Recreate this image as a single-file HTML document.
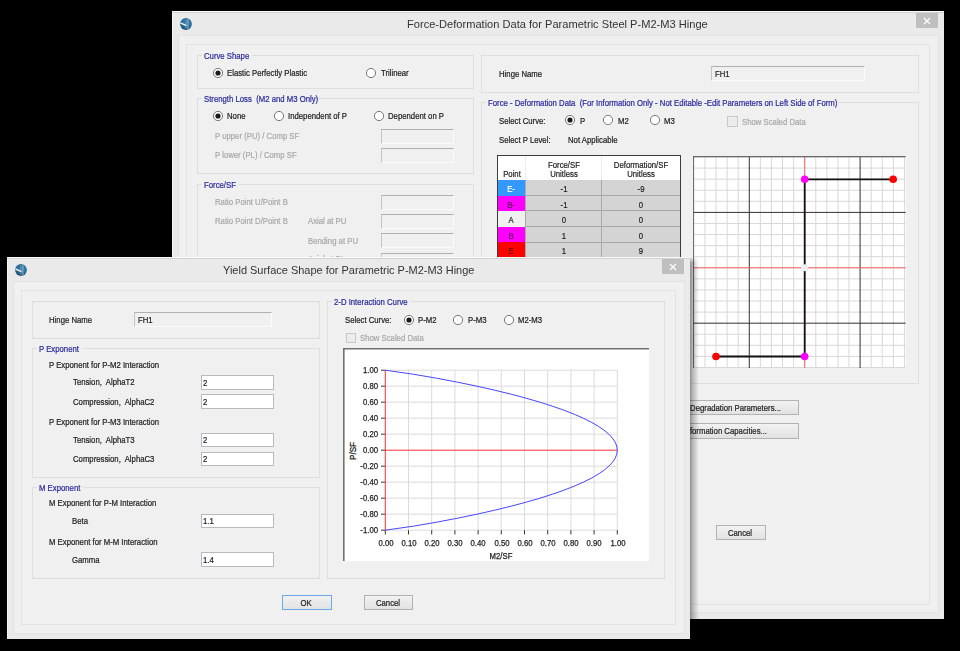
<!DOCTYPE html><html><head><meta charset="utf-8"><style>
html,body{margin:0;padding:0;}
body{width:960px;height:651px;background:#000;position:relative;overflow:hidden;font-family:"Liberation Sans",sans-serif;}
.t{position:absolute;white-space:nowrap;line-height:1;transform-origin:0 0;-webkit-text-stroke:0.25px currentColor;}
</style></head><body>
<div style="position:absolute;left:172.00px;top:11.00px;width:772.00px;height:607.50px;background:#eaeaea;border-top:1px solid #fafafa;border-left:1px solid #f7f7f7;box-sizing:border-box;"></div>
<div style="position:absolute;left:172.00px;top:12.00px;width:772.00px;height:1.00px;background:#d2d2d2;"></div>
<svg style="position:absolute;left:176.00px;top:13.50px" width="20" height="20" viewBox="0 0 20 20"><defs><radialGradient id="g186" cx="60%" cy="35%" r="75%"><stop offset="0" stop-color="#3d86b4"/><stop offset="0.6" stop-color="#2a6a93"/><stop offset="1" stop-color="#173f5e"/></radialGradient></defs><circle cx="10" cy="10" r="5.9" fill="url(#g186)"/><path d="M11.9 4.6 L11.9 15.4" stroke="#8db5cf" stroke-width="1"/><path d="M9.9 5.5 L9.9 15" stroke="#6f98b3" stroke-width="0.8"/><path d="M4.5 9 L10.5 11.6" stroke="#e4ecf1" stroke-width="1.5"/></svg>
<div class="t" style="left:407.30px;top:19.00px;font-size:11.8px;color:#333;transform:scale(0.94,1);transform-origin:0 9px;-webkit-text-stroke:0;">Force-Deformation Data for Parametric Steel P-M2-M3 Hinge</div>
<div style="position:absolute;left:916.00px;top:13.00px;width:22.40px;height:15.00px;background:#bfbfbf;"></div>
<svg style="position:absolute;left:922.20px;top:15.50px" width="10" height="10" viewBox="0 0 10 10"><path d="M2 2 L8 8 M8 2 L2 8" stroke="#fff" stroke-width="1.25"/></svg>
<div style="position:absolute;left:178.00px;top:35.00px;width:761.00px;height:578.00px;background:#f0f0f0;border:1px solid #e3e3e3;box-sizing:border-box;"></div>
<div style="position:absolute;left:186.00px;top:44.00px;width:744.00px;height:561.00px;border:1px solid #e3e3e3;box-sizing:border-box;"></div>
<div style="position:absolute;left:197.00px;top:55.00px;width:277.00px;height:34.00px;border:1px solid #dedede;box-sizing:border-box;"></div>
<div style="position:absolute;left:201.60px;top:50.70px;width:50.00px;height:10.00px;background:#f0f0f0;"></div>
<div class="t" style="left:203.60px;top:51.00px;font-size:10px;color:#2a2a9e;transform:scale(0.775,0.92);transform-origin:0 8px;">Curve Shape</div>
<svg style="position:absolute;left:211.60px;top:67.30px" width="12" height="12" viewBox="0 0 12 12"><circle cx="6" cy="6" r="4.6" fill="#fff" stroke="#6a6a6a" stroke-width="0.9"/><circle cx="6" cy="6" r="2.6" fill="#1a1a1a"/></svg>
<div class="t" style="left:227.20px;top:68.00px;font-size:10px;color:#1e1e1e;transform:scale(0.775,0.92);transform-origin:0 8px;">Elastic Perfectly Plastic</div>
<svg style="position:absolute;left:365.00px;top:67.30px" width="12" height="12" viewBox="0 0 12 12"><circle cx="6" cy="6" r="4.6" fill="#fff" stroke="#6a6a6a" stroke-width="0.9"/></svg>
<div class="t" style="left:380.70px;top:68.00px;font-size:10px;color:#1e1e1e;transform:scale(0.775,0.92);transform-origin:0 8px;">Trilinear</div>
<div style="position:absolute;left:197.00px;top:97.60px;width:277.00px;height:76.40px;border:1px solid #dedede;box-sizing:border-box;"></div>
<div style="position:absolute;left:201.60px;top:93.70px;width:89.00px;height:10.00px;background:#f0f0f0;"></div>
<div class="t" style="left:203.60px;top:94.00px;font-size:10px;color:#2a2a9e;transform:scale(0.775,0.92);transform-origin:0 8px;">Strength Loss&nbsp; (M2 and M3 Only)</div>
<svg style="position:absolute;left:211.60px;top:110.30px" width="12" height="12" viewBox="0 0 12 12"><circle cx="6" cy="6" r="4.6" fill="#fff" stroke="#6a6a6a" stroke-width="0.9"/><circle cx="6" cy="6" r="2.6" fill="#1a1a1a"/></svg>
<div class="t" style="left:227.20px;top:111.00px;font-size:10px;color:#1e1e1e;transform:scale(0.775,0.92);transform-origin:0 8px;">None</div>
<svg style="position:absolute;left:272.70px;top:110.30px" width="12" height="12" viewBox="0 0 12 12"><circle cx="6" cy="6" r="4.6" fill="#fff" stroke="#6a6a6a" stroke-width="0.9"/></svg>
<div class="t" style="left:288.00px;top:111.00px;font-size:10px;color:#1e1e1e;transform:scale(0.775,0.92);transform-origin:0 8px;">Independent of P</div>
<svg style="position:absolute;left:372.80px;top:110.30px" width="12" height="12" viewBox="0 0 12 12"><circle cx="6" cy="6" r="4.6" fill="#fff" stroke="#6a6a6a" stroke-width="0.9"/></svg>
<div class="t" style="left:387.80px;top:111.00px;font-size:10px;color:#1e1e1e;transform:scale(0.775,0.92);transform-origin:0 8px;">Dependent on P</div>
<div class="t" style="left:215.00px;top:131.00px;font-size:10px;color:#a8a8a8;transform:scale(0.775,0.92);transform-origin:0 8px;">P upper (PU) / Comp SF</div>
<div style="position:absolute;left:381.00px;top:128.70px;width:72.60px;height:15.00px;background:#f0f0f0;border:1px solid #fbfbfb;border-top-color:#b0b0b0;border-left-color:#c4c4c4;box-sizing:border-box;"></div>
<div class="t" style="left:215.00px;top:150.00px;font-size:10px;color:#a8a8a8;transform:scale(0.775,0.92);transform-origin:0 8px;">P lower (PL) / Comp SF</div>
<div style="position:absolute;left:381.00px;top:148.00px;width:72.60px;height:15.00px;background:#f0f0f0;border:1px solid #fbfbfb;border-top-color:#b0b0b0;border-left-color:#c4c4c4;box-sizing:border-box;"></div>
<div style="position:absolute;left:197.00px;top:183.50px;width:277.00px;height:116.50px;border:1px solid #dedede;box-sizing:border-box;"></div>
<div style="position:absolute;left:201.60px;top:179.40px;width:37.00px;height:10.00px;background:#f0f0f0;"></div>
<div class="t" style="left:203.60px;top:180.00px;font-size:10px;color:#2a2a9e;transform:scale(0.775,0.92);transform-origin:0 8px;">Force/SF</div>
<div class="t" style="left:215.00px;top:197.00px;font-size:10px;color:#a8a8a8;transform:scale(0.775,0.92);transform-origin:0 8px;">Ratio Point U/Point B</div>
<div style="position:absolute;left:381.00px;top:194.50px;width:72.60px;height:15.00px;background:#f0f0f0;border:1px solid #fbfbfb;border-top-color:#b0b0b0;border-left-color:#c4c4c4;box-sizing:border-box;"></div>
<div class="t" style="left:215.00px;top:216.00px;font-size:10px;color:#a8a8a8;transform:scale(0.775,0.92);transform-origin:0 8px;">Ratio Point D/Point B</div>
<div class="t" style="left:307.50px;top:216.00px;font-size:10px;color:#a8a8a8;transform:scale(0.775,0.92);transform-origin:0 8px;">Axial at PU</div>
<div style="position:absolute;left:381.00px;top:213.70px;width:72.60px;height:15.00px;background:#f0f0f0;border:1px solid #fbfbfb;border-top-color:#b0b0b0;border-left-color:#c4c4c4;box-sizing:border-box;"></div>
<div class="t" style="left:307.50px;top:236.00px;font-size:10px;color:#a8a8a8;transform:scale(0.775,0.92);transform-origin:0 8px;">Bending at PU</div>
<div style="position:absolute;left:381.00px;top:233.00px;width:72.60px;height:15.00px;background:#f0f0f0;border:1px solid #fbfbfb;border-top-color:#b0b0b0;border-left-color:#c4c4c4;box-sizing:border-box;"></div>
<div class="t" style="left:307.50px;top:254.00px;font-size:10px;color:#a8a8a8;transform:scale(0.775,0.92);transform-origin:0 8px;">Axial at PL</div>
<div style="position:absolute;left:381.00px;top:252.50px;width:72.60px;height:15.00px;background:#f0f0f0;border:1px solid #fbfbfb;border-top-color:#b0b0b0;border-left-color:#c4c4c4;box-sizing:border-box;"></div>
<div style="position:absolute;left:481.00px;top:55.00px;width:438.00px;height:38.00px;border:1px solid #dedede;box-sizing:border-box;"></div>
<div class="t" style="left:498.70px;top:69.00px;font-size:10px;color:#1e1e1e;transform:scale(0.775,0.92);transform-origin:0 8px;">Hinge Name</div>
<div style="position:absolute;left:711.25px;top:66.25px;width:153.75px;height:15.00px;background:#f0f0f0;border:1px solid #fbfbfb;border-top-color:#b0b0b0;border-left-color:#c4c4c4;box-sizing:border-box;"></div>
<div class="t" style="left:714.75px;top:69.00px;font-size:10px;color:#1e1e1e;transform:scale(0.775,0.92);transform-origin:0 8px;">FH1</div>
<div style="position:absolute;left:481.00px;top:102.00px;width:438.00px;height:282.00px;border:1px solid #dedede;box-sizing:border-box;"></div>
<div style="position:absolute;left:485.50px;top:97.30px;width:352.00px;height:10.00px;background:#f0f0f0;"></div>
<div class="t" style="left:487.50px;top:98.00px;font-size:10px;color:#2a2a9e;transform:scale(0.775,0.92);transform-origin:0 8px;">Force - Deformation Data&nbsp; (For Information Only - Not Editable -Edit Parameters on Left Side of Form)</div>
<div class="t" style="left:498.70px;top:116.00px;font-size:10px;color:#1e1e1e;transform:scale(0.775,0.92);transform-origin:0 8px;">Select Curve:</div>
<svg style="position:absolute;left:564.00px;top:114.00px" width="12" height="12" viewBox="0 0 12 12"><circle cx="6" cy="6" r="4.6" fill="#fff" stroke="#6a6a6a" stroke-width="0.9"/><circle cx="6" cy="6" r="2.6" fill="#1a1a1a"/></svg>
<div class="t" style="left:579.50px;top:116.00px;font-size:10px;color:#1e1e1e;transform:scale(0.775,0.92);transform-origin:0 8px;">P</div>
<svg style="position:absolute;left:602.20px;top:114.00px" width="12" height="12" viewBox="0 0 12 12"><circle cx="6" cy="6" r="4.6" fill="#fff" stroke="#6a6a6a" stroke-width="0.9"/></svg>
<div class="t" style="left:617.50px;top:116.00px;font-size:10px;color:#1e1e1e;transform:scale(0.775,0.92);transform-origin:0 8px;">M2</div>
<svg style="position:absolute;left:649.00px;top:114.00px" width="12" height="12" viewBox="0 0 12 12"><circle cx="6" cy="6" r="4.6" fill="#fff" stroke="#6a6a6a" stroke-width="0.9"/></svg>
<div class="t" style="left:664.00px;top:116.00px;font-size:10px;color:#1e1e1e;transform:scale(0.775,0.92);transform-origin:0 8px;">M3</div>
<div style="position:absolute;left:727.00px;top:116.00px;width:10.50px;height:10.50px;border:1px solid #c8c8c8;background:#ececec;box-sizing:border-box;"></div>
<div class="t" style="left:741.80px;top:117.00px;font-size:10px;color:#a8a8a8;transform:scale(0.775,0.92);transform-origin:0 8px;">Show Scaled Data</div>
<div class="t" style="left:498.70px;top:135.00px;font-size:10px;color:#1e1e1e;transform:scale(0.775,0.92);transform-origin:0 8px;">Select P Level:</div>
<div class="t" style="left:567.50px;top:135.00px;font-size:10px;color:#1e1e1e;transform:scale(0.775,0.92);transform-origin:0 8px;">Not Applicable</div>
<div style="position:absolute;left:497.00px;top:155.00px;width:184.00px;height:145.00px;background:#d4d4d4;border:1px solid #3c3c3c;box-sizing:border-box;"></div>
<div style="position:absolute;left:498.00px;top:156.00px;width:182.00px;height:24.20px;background:#fff;"></div>
<div style="position:absolute;left:524.50px;top:156.00px;width:1.00px;height:24.50px;background:#e8eef8;"></div>
<div style="position:absolute;left:601.00px;top:156.00px;width:1.00px;height:24.50px;background:#e8eef8;"></div>
<div class="t" style="left:361.90px;width:300px;text-align:center;top:169.00px;font-size:10px;color:#1e1e1e;transform:scale(0.775,0.92);transform-origin:50% 8px;">Point</div>
<div class="t" style="left:414.00px;width:300px;text-align:center;top:160.00px;font-size:10px;color:#1e1e1e;transform:scale(0.775,0.92);transform-origin:50% 8px;">Force/SF</div>
<div class="t" style="left:414.00px;width:300px;text-align:center;top:169.00px;font-size:10px;color:#1e1e1e;transform:scale(0.775,0.92);transform-origin:50% 8px;">Unitless</div>
<div class="t" style="left:491.00px;width:300px;text-align:center;top:160.00px;font-size:10px;color:#1e1e1e;transform:scale(0.775,0.92);transform-origin:50% 8px;">Deformation/SF</div>
<div class="t" style="left:491.00px;width:300px;text-align:center;top:169.00px;font-size:10px;color:#1e1e1e;transform:scale(0.775,0.92);transform-origin:50% 8px;">Unitless</div>
<div style="position:absolute;left:498.00px;top:180.20px;width:27.00px;height:15.50px;background:#3399ff;"></div>
<div style="position:absolute;left:525.00px;top:194.90px;width:155.00px;height:0.80px;background:#a8a8a8;"></div>
<div style="position:absolute;left:524.50px;top:180.20px;width:1.00px;height:15.50px;background:#a8a8a8;"></div>
<div style="position:absolute;left:601.00px;top:180.20px;width:1.00px;height:15.50px;background:#a8a8a8;"></div>
<div class="t" style="left:360.80px;width:300px;text-align:center;top:184.00px;font-size:10px;color:#ffffff;transform:scale(0.775,0.92);transform-origin:50% 8px;">E-</div>
<div class="t" style="left:413.50px;width:300px;text-align:center;top:184.00px;font-size:10px;color:#1e1e1e;transform:scale(0.775,0.92);transform-origin:50% 8px;">-1</div>
<div class="t" style="left:491.00px;width:300px;text-align:center;top:184.00px;font-size:10px;color:#1e1e1e;transform:scale(0.775,0.92);transform-origin:50% 8px;">-9</div>
<div style="position:absolute;left:498.00px;top:195.75px;width:27.00px;height:15.50px;background:#ff00ff;"></div>
<div style="position:absolute;left:525.00px;top:210.45px;width:155.00px;height:0.80px;background:#a8a8a8;"></div>
<div style="position:absolute;left:524.50px;top:195.75px;width:1.00px;height:15.50px;background:#a8a8a8;"></div>
<div style="position:absolute;left:601.00px;top:195.75px;width:1.00px;height:15.50px;background:#a8a8a8;"></div>
<div class="t" style="left:360.80px;width:300px;text-align:center;top:200.00px;font-size:10px;color:#5a005a;transform:scale(0.775,0.92);transform-origin:50% 8px;">B-</div>
<div class="t" style="left:413.50px;width:300px;text-align:center;top:200.00px;font-size:10px;color:#1e1e1e;transform:scale(0.775,0.92);transform-origin:50% 8px;">-1</div>
<div class="t" style="left:491.00px;width:300px;text-align:center;top:200.00px;font-size:10px;color:#1e1e1e;transform:scale(0.775,0.92);transform-origin:50% 8px;">0</div>
<div style="position:absolute;left:498.00px;top:211.30px;width:27.00px;height:15.50px;background:#f0f0f0;"></div>
<div style="position:absolute;left:525.00px;top:226.00px;width:155.00px;height:0.80px;background:#a8a8a8;"></div>
<div style="position:absolute;left:524.50px;top:211.30px;width:1.00px;height:15.50px;background:#a8a8a8;"></div>
<div style="position:absolute;left:601.00px;top:211.30px;width:1.00px;height:15.50px;background:#a8a8a8;"></div>
<div class="t" style="left:360.80px;width:300px;text-align:center;top:215.00px;font-size:10px;color:#1e1e1e;transform:scale(0.775,0.92);transform-origin:50% 8px;">A</div>
<div class="t" style="left:413.50px;width:300px;text-align:center;top:215.00px;font-size:10px;color:#1e1e1e;transform:scale(0.775,0.92);transform-origin:50% 8px;">0</div>
<div class="t" style="left:491.00px;width:300px;text-align:center;top:215.00px;font-size:10px;color:#1e1e1e;transform:scale(0.775,0.92);transform-origin:50% 8px;">0</div>
<div style="position:absolute;left:498.00px;top:226.85px;width:27.00px;height:15.50px;background:#ff00ff;"></div>
<div style="position:absolute;left:525.00px;top:241.55px;width:155.00px;height:0.80px;background:#a8a8a8;"></div>
<div style="position:absolute;left:524.50px;top:226.85px;width:1.00px;height:15.50px;background:#a8a8a8;"></div>
<div style="position:absolute;left:601.00px;top:226.85px;width:1.00px;height:15.50px;background:#a8a8a8;"></div>
<div class="t" style="left:360.80px;width:300px;text-align:center;top:231.00px;font-size:10px;color:#5a005a;transform:scale(0.775,0.92);transform-origin:50% 8px;">B</div>
<div class="t" style="left:413.50px;width:300px;text-align:center;top:231.00px;font-size:10px;color:#1e1e1e;transform:scale(0.775,0.92);transform-origin:50% 8px;">1</div>
<div class="t" style="left:491.00px;width:300px;text-align:center;top:231.00px;font-size:10px;color:#1e1e1e;transform:scale(0.775,0.92);transform-origin:50% 8px;">0</div>
<div style="position:absolute;left:498.00px;top:242.40px;width:27.00px;height:15.50px;background:#ff0000;"></div>
<div style="position:absolute;left:525.00px;top:257.10px;width:155.00px;height:0.80px;background:#a8a8a8;"></div>
<div style="position:absolute;left:524.50px;top:242.40px;width:1.00px;height:15.50px;background:#a8a8a8;"></div>
<div style="position:absolute;left:601.00px;top:242.40px;width:1.00px;height:15.50px;background:#a8a8a8;"></div>
<div class="t" style="left:360.80px;width:300px;text-align:center;top:246.00px;font-size:10px;color:#5a0000;transform:scale(0.775,0.92);transform-origin:50% 8px;">E</div>
<div class="t" style="left:413.50px;width:300px;text-align:center;top:246.00px;font-size:10px;color:#1e1e1e;transform:scale(0.775,0.92);transform-origin:50% 8px;">1</div>
<div class="t" style="left:491.00px;width:300px;text-align:center;top:246.00px;font-size:10px;color:#1e1e1e;transform:scale(0.775,0.92);transform-origin:50% 8px;">9</div>
<svg style="position:absolute;left:693.3px;top:155.8px" width="212.70000000000005" height="212.2" viewBox="693.3 155.8 212.70000000000005 212.2"><rect x="693.3" y="155.8" width="212.70000000000005" height="212.2" fill="#fff"/><line x1="694.2" y1="155.8" x2="694.2" y2="368" stroke="#d8d8d8" stroke-width="1"/><line x1="693.3" y1="156.8" x2="906" y2="156.8" stroke="#d8d8d8" stroke-width="1"/><line x1="705.28" y1="155.8" x2="705.28" y2="368" stroke="#d8d8d8" stroke-width="1"/><line x1="693.3" y1="167.88000000000002" x2="906" y2="167.88000000000002" stroke="#d8d8d8" stroke-width="1"/><line x1="716.36" y1="155.8" x2="716.36" y2="368" stroke="#d8d8d8" stroke-width="1"/><line x1="693.3" y1="178.96000000000004" x2="906" y2="178.96000000000004" stroke="#d8d8d8" stroke-width="1"/><line x1="727.44" y1="155.8" x2="727.44" y2="368" stroke="#d8d8d8" stroke-width="1"/><line x1="693.3" y1="190.04000000000002" x2="906" y2="190.04000000000002" stroke="#d8d8d8" stroke-width="1"/><line x1="738.52" y1="155.8" x2="738.52" y2="368" stroke="#d8d8d8" stroke-width="1"/><line x1="693.3" y1="201.12" x2="906" y2="201.12" stroke="#d8d8d8" stroke-width="1"/><line x1="760.68" y1="155.8" x2="760.68" y2="368" stroke="#d8d8d8" stroke-width="1"/><line x1="693.3" y1="223.28000000000003" x2="906" y2="223.28000000000003" stroke="#d8d8d8" stroke-width="1"/><line x1="771.76" y1="155.8" x2="771.76" y2="368" stroke="#d8d8d8" stroke-width="1"/><line x1="693.3" y1="234.36" x2="906" y2="234.36" stroke="#d8d8d8" stroke-width="1"/><line x1="782.84" y1="155.8" x2="782.84" y2="368" stroke="#d8d8d8" stroke-width="1"/><line x1="693.3" y1="245.44000000000003" x2="906" y2="245.44000000000003" stroke="#d8d8d8" stroke-width="1"/><line x1="793.92" y1="155.8" x2="793.92" y2="368" stroke="#d8d8d8" stroke-width="1"/><line x1="693.3" y1="256.52000000000004" x2="906" y2="256.52000000000004" stroke="#d8d8d8" stroke-width="1"/><line x1="805.0" y1="155.8" x2="805.0" y2="368" stroke="#d8d8d8" stroke-width="1"/><line x1="693.3" y1="267.6" x2="906" y2="267.6" stroke="#d8d8d8" stroke-width="1"/><line x1="816.08" y1="155.8" x2="816.08" y2="368" stroke="#d8d8d8" stroke-width="1"/><line x1="693.3" y1="278.68" x2="906" y2="278.68" stroke="#d8d8d8" stroke-width="1"/><line x1="827.16" y1="155.8" x2="827.16" y2="368" stroke="#d8d8d8" stroke-width="1"/><line x1="693.3" y1="289.76000000000005" x2="906" y2="289.76000000000005" stroke="#d8d8d8" stroke-width="1"/><line x1="838.24" y1="155.8" x2="838.24" y2="368" stroke="#d8d8d8" stroke-width="1"/><line x1="693.3" y1="300.84000000000003" x2="906" y2="300.84000000000003" stroke="#d8d8d8" stroke-width="1"/><line x1="849.32" y1="155.8" x2="849.32" y2="368" stroke="#d8d8d8" stroke-width="1"/><line x1="693.3" y1="311.92" x2="906" y2="311.92" stroke="#d8d8d8" stroke-width="1"/><line x1="871.48" y1="155.8" x2="871.48" y2="368" stroke="#d8d8d8" stroke-width="1"/><line x1="693.3" y1="334.08000000000004" x2="906" y2="334.08000000000004" stroke="#d8d8d8" stroke-width="1"/><line x1="882.56" y1="155.8" x2="882.56" y2="368" stroke="#d8d8d8" stroke-width="1"/><line x1="693.3" y1="345.16" x2="906" y2="345.16" stroke="#d8d8d8" stroke-width="1"/><line x1="893.64" y1="155.8" x2="893.64" y2="368" stroke="#d8d8d8" stroke-width="1"/><line x1="693.3" y1="356.24" x2="906" y2="356.24" stroke="#d8d8d8" stroke-width="1"/><line x1="904.72" y1="155.8" x2="904.72" y2="368" stroke="#d8d8d8" stroke-width="1"/><line x1="693.3" y1="367.32000000000005" x2="906" y2="367.32000000000005" stroke="#d8d8d8" stroke-width="1"/><line x1="749.6" y1="155.8" x2="749.6" y2="368" stroke="#303030" stroke-width="1"/><line x1="693.3" y1="212.20000000000002" x2="906" y2="212.20000000000002" stroke="#303030" stroke-width="1"/><line x1="860.4" y1="155.8" x2="860.4" y2="368" stroke="#303030" stroke-width="1"/><line x1="693.3" y1="323.0" x2="906" y2="323.0" stroke="#303030" stroke-width="1"/><line x1="693.3" y1="267.6" x2="906" y2="267.6" stroke="#ff6060" stroke-width="1"/><line x1="805" y1="155.8" x2="805" y2="368" stroke="#ff6060" stroke-width="1"/><polyline points="893.5,179.1 805,179.1 805,356.3 716.3,356.3" fill="none" stroke="#111" stroke-width="1.8"/><circle cx="805" cy="179.1" r="3.8" fill="#ff00ff"/><circle cx="893.5" cy="179.1" r="3.8" fill="#ff0000"/><circle cx="805" cy="356.3" r="3.8" fill="#ff00ff"/><circle cx="716.3" cy="356.3" r="3.8" fill="#ff0000"/><circle cx="805" cy="267.6" r="3.5" fill="#eeeeee"/><line x1="693.3" y1="156.5" x2="906" y2="156.5" stroke="#6a6a6a" stroke-width="1.3"/><line x1="693.5" y1="155.8" x2="693.5" y2="368" stroke="#5a5a5a" stroke-width="1.3"/></svg>
<div style="position:absolute;left:660.00px;top:400.00px;width:138.70px;height:14.70px;background:linear-gradient(#f2f2f2,#e2e2e2);border:1px solid #b2b2b2;box-sizing:border-box;"></div>
<div class="t" style="left:480.80px;width:300px;text-align:right;top:403.00px;font-size:10px;color:#1e1e1e;transform:scale(0.775,0.92);transform-origin:100% 8px;">Modify Strength Degradation Parameters...</div>
<div style="position:absolute;left:660.00px;top:423.10px;width:138.70px;height:15.50px;background:linear-gradient(#f2f2f2,#e2e2e2);border:1px solid #b2b2b2;box-sizing:border-box;"></div>
<div class="t" style="left:467.20px;width:300px;text-align:right;top:426.00px;font-size:10px;color:#1e1e1e;transform:scale(0.775,0.92);transform-origin:100% 8px;">Modify/Show Deformation Capacities...</div>
<div style="position:absolute;left:716.00px;top:524.60px;width:49.90px;height:15.10px;background:linear-gradient(#f2f2f2,#e2e2e2);border:1px solid #b2b2b2;box-sizing:border-box;"></div>
<div class="t" style="left:590.15px;width:300px;text-align:center;top:528.00px;font-size:10px;color:#1e1e1e;transform:scale(0.775,0.92);transform-origin:50% 8px;">Cancel</div>
<div style="position:absolute;left:689.50px;top:257.00px;width:9.50px;height:382.50px;background:linear-gradient(90deg,rgba(0,0,0,.40),rgba(0,0,0,.22) 35%,rgba(0,0,0,0));-webkit-mask-image:linear-gradient(180deg,transparent,#000 6px);"></div>
<div style="position:absolute;left:7.00px;top:257.00px;width:682.60px;height:382.40px;background:#eaeaea;border-top:1px solid #fafafa;border-left:1px solid #f7f7f7;box-sizing:border-box;"></div>
<div style="position:absolute;left:7.00px;top:258.00px;width:682.60px;height:1.00px;background:#d2d2d2;"></div>
<svg style="position:absolute;left:10.70px;top:259.70px" width="20" height="20" viewBox="0 0 20 20"><defs><radialGradient id="g20" cx="60%" cy="35%" r="75%"><stop offset="0" stop-color="#3d86b4"/><stop offset="0.6" stop-color="#2a6a93"/><stop offset="1" stop-color="#173f5e"/></radialGradient></defs><circle cx="10" cy="10" r="5.9" fill="url(#g20)"/><path d="M11.9 4.6 L11.9 15.4" stroke="#8db5cf" stroke-width="1"/><path d="M9.9 5.5 L9.9 15" stroke="#6f98b3" stroke-width="0.8"/><path d="M4.5 9 L10.5 11.6" stroke="#e4ecf1" stroke-width="1.5"/></svg>
<div class="t" style="left:222.70px;top:265.00px;font-size:11.8px;color:#333;transform:scale(0.93,1);transform-origin:0 9px;-webkit-text-stroke:0;">Yield Surface Shape for Parametric P-M2-M3 Hinge</div>
<div style="position:absolute;left:661.50px;top:259.40px;width:22.50px;height:14.40px;background:#bfbfbf;"></div>
<svg style="position:absolute;left:667.75px;top:261.60px" width="10" height="10" viewBox="0 0 10 10"><path d="M2 2 L8 8 M8 2 L2 8" stroke="#fff" stroke-width="1.25"/></svg>
<div style="position:absolute;left:13.00px;top:281.00px;width:671.60px;height:352.80px;background:#f0f0f0;border:1px solid #e3e3e3;box-sizing:border-box;"></div>
<div style="position:absolute;left:20.50px;top:290.00px;width:655.50px;height:334.50px;border:1px solid #e3e3e3;box-sizing:border-box;"></div>
<div style="position:absolute;left:32.00px;top:301.00px;width:288.00px;height:37.50px;border:1px solid #dedede;box-sizing:border-box;"></div>
<div class="t" style="left:49.40px;top:315.00px;font-size:10px;color:#1e1e1e;transform:scale(0.775,0.92);transform-origin:0 8px;">Hinge Name</div>
<div style="position:absolute;left:134.00px;top:312.20px;width:138.30px;height:15.00px;background:#f0f0f0;border:1px solid #fbfbfb;border-top-color:#b0b0b0;border-left-color:#c4c4c4;box-sizing:border-box;"></div>
<div class="t" style="left:137.50px;top:315.00px;font-size:10px;color:#1e1e1e;transform:scale(0.775,0.92);transform-origin:0 8px;">FH1</div>
<div style="position:absolute;left:32.00px;top:348.00px;width:288.00px;height:130.00px;border:1px solid #dedede;box-sizing:border-box;"></div>
<div style="position:absolute;left:36.70px;top:343.80px;width:45.00px;height:10.00px;background:#f0f0f0;"></div>
<div class="t" style="left:38.70px;top:344.00px;font-size:10px;color:#2a2a9e;transform:scale(0.775,0.92);transform-origin:0 8px;">P Exponent</div>
<div class="t" style="left:49.40px;top:360.00px;font-size:10px;color:#1e1e1e;transform:scale(0.775,0.92);transform-origin:0 8px;">P Exponent for P-M2 Interaction</div>
<div class="t" style="left:72.50px;top:377.00px;font-size:10px;color:#1e1e1e;transform:scale(0.775,0.92);transform-origin:0 8px;">Tension,&nbsp; AlphaT2</div>
<div style="position:absolute;left:201.30px;top:375.00px;width:72.50px;height:14.50px;background:#fff;border:1px solid #b9b9c0;box-sizing:border-box;"></div>
<div class="t" style="left:202.90px;top:378.00px;font-size:10px;color:#1e1e1e;transform:scale(0.775,0.92);transform-origin:0 8px;">2</div>
<div class="t" style="left:72.50px;top:397.00px;font-size:10px;color:#1e1e1e;transform:scale(0.775,0.92);transform-origin:0 8px;">Compression,&nbsp; AlphaC2</div>
<div style="position:absolute;left:201.30px;top:394.20px;width:72.50px;height:14.50px;background:#fff;border:1px solid #b9b9c0;box-sizing:border-box;"></div>
<div class="t" style="left:202.90px;top:397.00px;font-size:10px;color:#1e1e1e;transform:scale(0.775,0.92);transform-origin:0 8px;">2</div>
<div class="t" style="left:49.40px;top:417.00px;font-size:10px;color:#1e1e1e;transform:scale(0.775,0.92);transform-origin:0 8px;">P Exponent for P-M3 Interaction</div>
<div class="t" style="left:72.50px;top:435.00px;font-size:10px;color:#1e1e1e;transform:scale(0.775,0.92);transform-origin:0 8px;">Tension,&nbsp; AlphaT3</div>
<div style="position:absolute;left:201.30px;top:432.50px;width:72.50px;height:14.50px;background:#fff;border:1px solid #b9b9c0;box-sizing:border-box;"></div>
<div class="t" style="left:202.90px;top:435.00px;font-size:10px;color:#1e1e1e;transform:scale(0.775,0.92);transform-origin:0 8px;">2</div>
<div class="t" style="left:72.50px;top:454.00px;font-size:10px;color:#1e1e1e;transform:scale(0.775,0.92);transform-origin:0 8px;">Compression,&nbsp; AlphaC3</div>
<div style="position:absolute;left:201.30px;top:451.70px;width:72.50px;height:14.50px;background:#fff;border:1px solid #b9b9c0;box-sizing:border-box;"></div>
<div class="t" style="left:202.90px;top:454.00px;font-size:10px;color:#1e1e1e;transform:scale(0.775,0.92);transform-origin:0 8px;">2</div>
<div style="position:absolute;left:32.00px;top:487.00px;width:288.00px;height:92.00px;border:1px solid #dedede;box-sizing:border-box;"></div>
<div style="position:absolute;left:36.70px;top:482.50px;width:45.00px;height:10.00px;background:#f0f0f0;"></div>
<div class="t" style="left:38.70px;top:483.00px;font-size:10px;color:#2a2a9e;transform:scale(0.775,0.92);transform-origin:0 8px;">M Exponent</div>
<div class="t" style="left:49.40px;top:498.00px;font-size:10px;color:#1e1e1e;transform:scale(0.775,0.92);transform-origin:0 8px;">M Exponent for P-M Interaction</div>
<div class="t" style="left:72.20px;top:516.00px;font-size:10px;color:#1e1e1e;transform:scale(0.775,0.92);transform-origin:0 8px;">Beta</div>
<div style="position:absolute;left:201.40px;top:513.60px;width:72.40px;height:14.40px;background:#fff;border:1px solid #b9b9c0;box-sizing:border-box;"></div>
<div class="t" style="left:203.00px;top:516.00px;font-size:10px;color:#1e1e1e;transform:scale(0.775,0.92);transform-origin:0 8px;">1.1</div>
<div class="t" style="left:49.40px;top:537.00px;font-size:10px;color:#1e1e1e;transform:scale(0.775,0.92);transform-origin:0 8px;">M Exponent for M-M Interaction</div>
<div class="t" style="left:72.20px;top:555.00px;font-size:10px;color:#1e1e1e;transform:scale(0.775,0.92);transform-origin:0 8px;">Gamma</div>
<div style="position:absolute;left:201.40px;top:552.20px;width:72.40px;height:14.50px;background:#fff;border:1px solid #b9b9c0;box-sizing:border-box;"></div>
<div class="t" style="left:203.00px;top:555.00px;font-size:10px;color:#1e1e1e;transform:scale(0.775,0.92);transform-origin:0 8px;">1.4</div>
<div style="position:absolute;left:327.00px;top:301.00px;width:338.00px;height:277.50px;border:1px solid #dedede;box-sizing:border-box;"></div>
<div style="position:absolute;left:331.70px;top:297.00px;width:79.00px;height:10.00px;background:#f0f0f0;"></div>
<div class="t" style="left:333.70px;top:297.00px;font-size:10px;color:#2a2a9e;transform:scale(0.775,0.92);transform-origin:0 8px;">2-D Interaction Curve</div>
<div class="t" style="left:345.00px;top:315.00px;font-size:10px;color:#1e1e1e;transform:scale(0.775,0.92);transform-origin:0 8px;">Select Curve:</div>
<svg style="position:absolute;left:402.70px;top:313.80px" width="12" height="12" viewBox="0 0 12 12"><circle cx="6" cy="6" r="4.6" fill="#fff" stroke="#6a6a6a" stroke-width="0.9"/><circle cx="6" cy="6" r="2.6" fill="#1a1a1a"/></svg>
<div class="t" style="left:418.20px;top:315.00px;font-size:10px;color:#1e1e1e;transform:scale(0.775,0.92);transform-origin:0 8px;">P-M2</div>
<svg style="position:absolute;left:452.20px;top:313.80px" width="12" height="12" viewBox="0 0 12 12"><circle cx="6" cy="6" r="4.6" fill="#fff" stroke="#6a6a6a" stroke-width="0.9"/></svg>
<div class="t" style="left:467.50px;top:315.00px;font-size:10px;color:#1e1e1e;transform:scale(0.775,0.92);transform-origin:0 8px;">P-M3</div>
<svg style="position:absolute;left:502.70px;top:313.80px" width="12" height="12" viewBox="0 0 12 12"><circle cx="6" cy="6" r="4.6" fill="#fff" stroke="#6a6a6a" stroke-width="0.9"/></svg>
<div class="t" style="left:518.00px;top:315.00px;font-size:10px;color:#1e1e1e;transform:scale(0.775,0.92);transform-origin:0 8px;">M2-M3</div>
<div style="position:absolute;left:346.00px;top:332.50px;width:10.00px;height:10.00px;border:1px solid #c8c8c8;background:#ececec;box-sizing:border-box;"></div>
<div class="t" style="left:360.00px;top:333.00px;font-size:10px;color:#a8a8a8;transform:scale(0.775,0.92);transform-origin:0 8px;">Show Scaled Data</div>
<svg style="position:absolute;left:343.3px;top:348.3px" width="306.2" height="213.0" viewBox="343.3 348.3 306.2 213.0"><rect x="343.3" y="348.3" width="306.2" height="212.99999999999994" fill="#fff"/><line x1="408.80" y1="370.5" x2="408.80" y2="530.5" stroke="#dadada" stroke-width="1"/><line x1="432.00" y1="370.5" x2="432.00" y2="530.5" stroke="#dadada" stroke-width="1"/><line x1="455.20" y1="370.5" x2="455.20" y2="530.5" stroke="#dadada" stroke-width="1"/><line x1="478.40" y1="370.5" x2="478.40" y2="530.5" stroke="#dadada" stroke-width="1"/><line x1="501.60" y1="370.5" x2="501.60" y2="530.5" stroke="#dadada" stroke-width="1"/><line x1="524.80" y1="370.5" x2="524.80" y2="530.5" stroke="#dadada" stroke-width="1"/><line x1="548.00" y1="370.5" x2="548.00" y2="530.5" stroke="#dadada" stroke-width="1"/><line x1="571.20" y1="370.5" x2="571.20" y2="530.5" stroke="#dadada" stroke-width="1"/><line x1="594.40" y1="370.5" x2="594.40" y2="530.5" stroke="#dadada" stroke-width="1"/><line x1="617.60" y1="370.5" x2="617.60" y2="530.5" stroke="#dadada" stroke-width="1"/><line x1="385.6" y1="370.50" x2="617.6" y2="370.50" stroke="#dadada" stroke-width="1"/><line x1="381.3" y1="370.50" x2="385.6" y2="370.50" stroke="#333" stroke-width="1"/><line x1="385.6" y1="386.50" x2="617.6" y2="386.50" stroke="#dadada" stroke-width="1"/><line x1="381.3" y1="386.50" x2="385.6" y2="386.50" stroke="#333" stroke-width="1"/><line x1="385.6" y1="402.50" x2="617.6" y2="402.50" stroke="#dadada" stroke-width="1"/><line x1="381.3" y1="402.50" x2="385.6" y2="402.50" stroke="#333" stroke-width="1"/><line x1="385.6" y1="418.50" x2="617.6" y2="418.50" stroke="#dadada" stroke-width="1"/><line x1="381.3" y1="418.50" x2="385.6" y2="418.50" stroke="#333" stroke-width="1"/><line x1="385.6" y1="434.50" x2="617.6" y2="434.50" stroke="#dadada" stroke-width="1"/><line x1="381.3" y1="434.50" x2="385.6" y2="434.50" stroke="#333" stroke-width="1"/><line x1="381.3" y1="450.50" x2="385.6" y2="450.50" stroke="#333" stroke-width="1"/><line x1="385.6" y1="466.50" x2="617.6" y2="466.50" stroke="#dadada" stroke-width="1"/><line x1="381.3" y1="466.50" x2="385.6" y2="466.50" stroke="#333" stroke-width="1"/><line x1="385.6" y1="482.50" x2="617.6" y2="482.50" stroke="#dadada" stroke-width="1"/><line x1="381.3" y1="482.50" x2="385.6" y2="482.50" stroke="#333" stroke-width="1"/><line x1="385.6" y1="498.50" x2="617.6" y2="498.50" stroke="#dadada" stroke-width="1"/><line x1="381.3" y1="498.50" x2="385.6" y2="498.50" stroke="#333" stroke-width="1"/><line x1="385.6" y1="514.50" x2="617.6" y2="514.50" stroke="#dadada" stroke-width="1"/><line x1="381.3" y1="514.50" x2="385.6" y2="514.50" stroke="#333" stroke-width="1"/><line x1="385.6" y1="530.50" x2="617.6" y2="530.50" stroke="#dadada" stroke-width="1"/><line x1="381.3" y1="530.50" x2="385.6" y2="530.50" stroke="#333" stroke-width="1"/><line x1="385.60" y1="530.5" x2="385.60" y2="534.8" stroke="#333" stroke-width="1"/><line x1="408.80" y1="530.5" x2="408.80" y2="534.8" stroke="#333" stroke-width="1"/><line x1="432.00" y1="530.5" x2="432.00" y2="534.8" stroke="#333" stroke-width="1"/><line x1="455.20" y1="530.5" x2="455.20" y2="534.8" stroke="#333" stroke-width="1"/><line x1="478.40" y1="530.5" x2="478.40" y2="534.8" stroke="#333" stroke-width="1"/><line x1="501.60" y1="530.5" x2="501.60" y2="534.8" stroke="#333" stroke-width="1"/><line x1="524.80" y1="530.5" x2="524.80" y2="534.8" stroke="#333" stroke-width="1"/><line x1="548.00" y1="530.5" x2="548.00" y2="534.8" stroke="#333" stroke-width="1"/><line x1="571.20" y1="530.5" x2="571.20" y2="534.8" stroke="#333" stroke-width="1"/><line x1="594.40" y1="530.5" x2="594.40" y2="534.8" stroke="#333" stroke-width="1"/><line x1="617.60" y1="530.5" x2="617.60" y2="534.8" stroke="#333" stroke-width="1"/><line x1="385.6" y1="450.5" x2="617.6" y2="450.5" stroke="#ff3030" stroke-width="1"/><line x1="385.6" y1="370.5" x2="385.6" y2="530.5" stroke="#ff3030" stroke-width="1"/><polyline points="385.60,370.50 413.55,374.50 436.86,378.50 457.94,382.50 477.25,386.50 495.02,390.50 511.39,394.50 526.44,398.50 540.23,402.50 552.81,406.50 564.21,410.50 574.47,414.50 583.59,418.50 591.61,422.50 598.54,426.50 604.38,430.50 609.15,434.50 612.85,438.50 615.49,442.50 617.07,446.50 617.60,450.50 617.07,454.50 615.49,458.50 612.85,462.50 609.15,466.50 604.38,470.50 598.54,474.50 591.61,478.50 583.59,482.50 574.47,486.50 564.21,490.50 552.81,494.50 540.23,498.50 526.44,502.50 511.39,506.50 495.02,510.50 477.25,514.50 457.94,518.50 436.86,522.50 413.55,526.50 385.60,530.50" fill="none" stroke="#4545ff" stroke-width="1"/><line x1="343.3" y1="349.1" x2="649.5" y2="349.1" stroke="#707070" stroke-width="1.6"/><line x1="344.1" y1="348.3" x2="344.1" y2="561.3" stroke="#707070" stroke-width="1.6"/></svg>
<div class="t" style="left:78.20px;width:300px;text-align:right;top:366.00px;font-size:8.5px;color:#222;transform:scale(0.91,1);transform-origin:100% 7px;">1.00</div>
<div class="t" style="left:78.20px;width:300px;text-align:right;top:382.00px;font-size:8.5px;color:#222;transform:scale(0.91,1);transform-origin:100% 7px;">0.80</div>
<div class="t" style="left:78.20px;width:300px;text-align:right;top:398.00px;font-size:8.5px;color:#222;transform:scale(0.91,1);transform-origin:100% 7px;">0.60</div>
<div class="t" style="left:78.20px;width:300px;text-align:right;top:414.00px;font-size:8.5px;color:#222;transform:scale(0.91,1);transform-origin:100% 7px;">0.40</div>
<div class="t" style="left:78.20px;width:300px;text-align:right;top:430.00px;font-size:8.5px;color:#222;transform:scale(0.91,1);transform-origin:100% 7px;">0.20</div>
<div class="t" style="left:78.20px;width:300px;text-align:right;top:446.00px;font-size:8.5px;color:#222;transform:scale(0.91,1);transform-origin:100% 7px;">0.00</div>
<div class="t" style="left:78.20px;width:300px;text-align:right;top:462.00px;font-size:8.5px;color:#222;transform:scale(0.91,1);transform-origin:100% 7px;">-0.20</div>
<div class="t" style="left:78.20px;width:300px;text-align:right;top:478.00px;font-size:8.5px;color:#222;transform:scale(0.91,1);transform-origin:100% 7px;">-0.40</div>
<div class="t" style="left:78.20px;width:300px;text-align:right;top:494.00px;font-size:8.5px;color:#222;transform:scale(0.91,1);transform-origin:100% 7px;">-0.60</div>
<div class="t" style="left:78.20px;width:300px;text-align:right;top:510.00px;font-size:8.5px;color:#222;transform:scale(0.91,1);transform-origin:100% 7px;">-0.80</div>
<div class="t" style="left:78.20px;width:300px;text-align:right;top:526.00px;font-size:8.5px;color:#222;transform:scale(0.91,1);transform-origin:100% 7px;">-1.00</div>
<div class="t" style="left:235.60px;width:300px;text-align:center;top:539.00px;font-size:8.5px;color:#222;transform:scale(0.91,1);transform-origin:50% 7px;">0.00</div>
<div class="t" style="left:258.80px;width:300px;text-align:center;top:539.00px;font-size:8.5px;color:#222;transform:scale(0.91,1);transform-origin:50% 7px;">0.10</div>
<div class="t" style="left:282.00px;width:300px;text-align:center;top:539.00px;font-size:8.5px;color:#222;transform:scale(0.91,1);transform-origin:50% 7px;">0.20</div>
<div class="t" style="left:305.20px;width:300px;text-align:center;top:539.00px;font-size:8.5px;color:#222;transform:scale(0.91,1);transform-origin:50% 7px;">0.30</div>
<div class="t" style="left:328.40px;width:300px;text-align:center;top:539.00px;font-size:8.5px;color:#222;transform:scale(0.91,1);transform-origin:50% 7px;">0.40</div>
<div class="t" style="left:351.60px;width:300px;text-align:center;top:539.00px;font-size:8.5px;color:#222;transform:scale(0.91,1);transform-origin:50% 7px;">0.50</div>
<div class="t" style="left:374.80px;width:300px;text-align:center;top:539.00px;font-size:8.5px;color:#222;transform:scale(0.91,1);transform-origin:50% 7px;">0.60</div>
<div class="t" style="left:398.00px;width:300px;text-align:center;top:539.00px;font-size:8.5px;color:#222;transform:scale(0.91,1);transform-origin:50% 7px;">0.70</div>
<div class="t" style="left:421.20px;width:300px;text-align:center;top:539.00px;font-size:8.5px;color:#222;transform:scale(0.91,1);transform-origin:50% 7px;">0.80</div>
<div class="t" style="left:444.40px;width:300px;text-align:center;top:539.00px;font-size:8.5px;color:#222;transform:scale(0.91,1);transform-origin:50% 7px;">0.90</div>
<div class="t" style="left:467.60px;width:300px;text-align:center;top:539.00px;font-size:8.5px;color:#222;transform:scale(0.91,1);transform-origin:50% 7px;">1.00</div>
<div class="t" style="left:351.30px;width:300px;text-align:center;top:552.00px;font-size:8.5px;color:#222;transform:scale(0.91,1);transform-origin:50% 7px;">M2/SF</div>
<div class="t" style="left:332.7px;top:446.0px;width:40px;text-align:center;font-size:8.5px;line-height:10px;color:#222;transform:rotate(-90deg) scaleX(0.95);transform-origin:50% 50%;">P/SF</div>
<div style="position:absolute;left:282.30px;top:595.00px;width:49.40px;height:15.00px;background:linear-gradient(#f2f2f2,#e2e2e2);border:1px solid #6aaae8;box-sizing:border-box;"></div>
<div class="t" style="left:156.20px;width:300px;text-align:center;top:598.00px;font-size:10px;color:#1e1e1e;transform:scale(0.775,0.92);transform-origin:50% 8px;">OK</div>
<div style="position:absolute;left:364.40px;top:595.00px;width:49.10px;height:15.00px;background:linear-gradient(#f2f2f2,#e2e2e2);border:1px solid #b2b2b2;box-sizing:border-box;"></div>
<div class="t" style="left:238.15px;width:300px;text-align:center;top:598.00px;font-size:10px;color:#1e1e1e;transform:scale(0.775,0.92);transform-origin:50% 8px;">Cancel</div>
</body></html>
